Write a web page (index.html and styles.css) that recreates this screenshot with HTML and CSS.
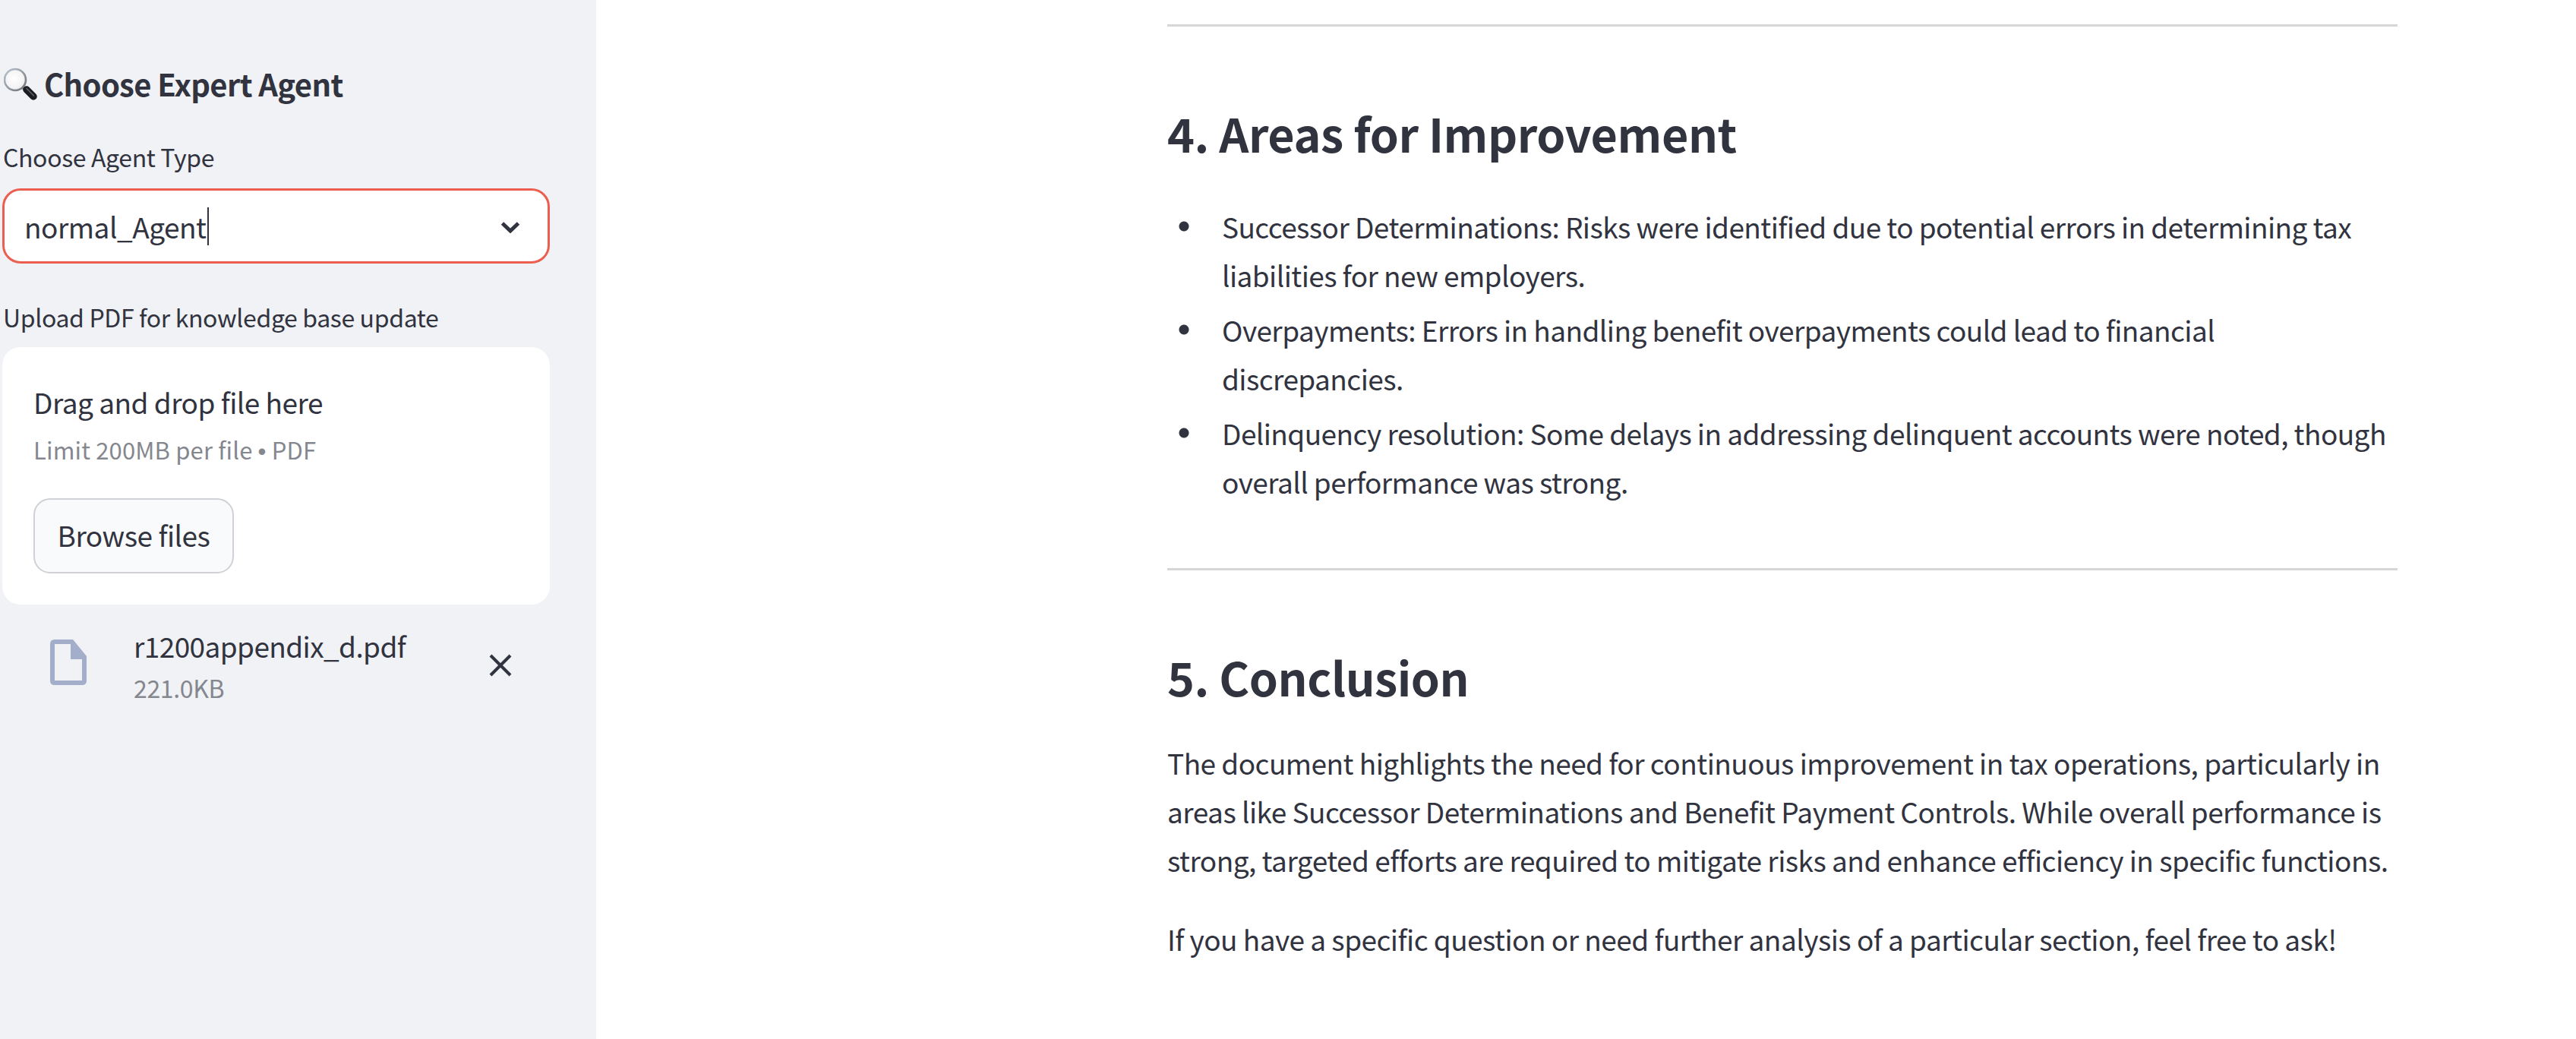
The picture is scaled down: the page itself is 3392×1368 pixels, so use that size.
FILE: index.html
```html
<!DOCTYPE html>
<html lang="en">
<head>
<meta charset="utf-8">
<title>Choose Expert Agent</title>
<link rel="stylesheet" href="styles.css">
</head>
<body>
<div class="app">
  <aside class="sidebar">
    <h3 class="side-title">
      <svg class="emoji" viewBox="0 0 44 44" aria-hidden="true">
        <defs>
          <radialGradient id="lens" cx="0.45" cy="0.45" r="0.6">
            <stop offset="0" stop-color="#ffffff"/>
            <stop offset="0.75" stop-color="#f3f3f3"/>
            <stop offset="1" stop-color="#d2d4d8"/>
          </radialGradient>
          <linearGradient id="rim" x1="0" y1="0" x2="1" y2="1">
            <stop offset="0" stop-color="#b9c6d4"/>
            <stop offset="1" stop-color="#6f7072"/>
          </linearGradient>
        </defs>
        <path d="M24 26 L28 30" stroke="#77787c" stroke-width="4"/>
        <path d="M30 30 L39 39" stroke="#1c1d22" stroke-width="9.5" stroke-linecap="round"/>
        <path d="M30 28.5 L39.5 38" stroke="#5f636b" stroke-width="1.6" stroke-linecap="round"/>
        <circle cx="15" cy="17" r="14" fill="url(#lens)" stroke="url(#rim)" stroke-width="2.6"/>
      </svg>
      <span>Choose Expert Agent</span>
    </h3>
    <label class="field-label label-agent">Choose Agent Type</label>
    <div class="select">
      <span class="select-value">normal_Agent</span><span class="caret"></span>
      <svg class="chevron" viewBox="0 0 26 16" aria-hidden="true"><path d="M2.5 3 L13 13 L23.5 3" fill="none" stroke="#31333f" stroke-width="5" stroke-linejoin="miter"/></svg>
    </div>
    <label class="field-label label-upload">Upload PDF for knowledge base update</label>
    <section class="dropzone">
      <div class="drop-title">Drag and drop file here</div>
      <div class="drop-limit">Limit 200MB per file <span class="dot">•</span> PDF</div>
      <button class="browse" type="button">Browse files</button>
    </section>
    <div class="file-row">
      <svg class="file-icon" viewBox="0 0 48 60" aria-hidden="true">
        <path d="M6 0 H30 L48 22 V54 Q48 60 42 60 H6 Q0 60 0 54 V6 Q0 0 6 0 Z M6 6 V54 H42 V26 H27 V6 Z" fill="#a3aeca" fill-rule="evenodd"/>
      </svg>
      <div class="file-meta">
        <div class="file-name">r1200appendix_d.pdf</div>
        <div class="file-size">221.0KB</div>
      </div>
      <svg class="file-close" viewBox="0 0 30 30" aria-hidden="true"><path d="M2 2 L28 28 M28 2 L2 28" fill="none" stroke="#31333f" stroke-width="4"/></svg>
    </div>
  </aside>
  <main class="main">
    <article class="content">
      <hr class="rule rule-top">
      <h2 class="heading">4. Areas for Improvement</h2>
      <ul class="list">
        <li>Successor Determinations: Risks were identified due to potential errors in determining tax liabilities for new employers.</li>
        <li>Overpayments: Errors in handling benefit overpayments could lead to financial discrepancies.</li>
        <li>Delinquency resolution: Some delays in addressing delinquent accounts were noted, though overall performance was strong.</li>
      </ul>
      <hr class="rule">
      <h2 class="heading">5. Conclusion</h2>
      <p class="para">The document highlights the need for continuous improvement in tax operations, particularly in areas like Successor Determinations and Benefit Payment Controls. While overall performance is strong, targeted efforts are required to mitigate risks and enhance efficiency in specific functions.</p>
      <p class="para">If you have a specific question or need further analysis of a particular section, feel free to ask!</p>
    </article>
  </main>
</div>
</body>
</html>
```
FILE: styles.css
```css
* { box-sizing: border-box; }
html, body { margin: 0; height: 100%; overflow: hidden; }
body {
  font-family: "Noto Sans CJK SC", "Source Sans Pro", "Noto Sans", sans-serif;
  color: #31333f;
  background: #fff;
}
.app { display: flex; height: 1368px; }
.sidebar {
  width: 785px;
  flex: none;
  background: #f0f2f6;
  padding: 0 61px 0 3px;
}
.side-title {
  display: flex;
  align-items: center;
  gap: 9px;
  margin: 80px 0 0;
  height: 60px;
  font-size: 40px;
  letter-spacing: -0.65px;
  font-weight: 700;
  line-height: 60px;
}
.emoji { width: 44px; height: 44px; margin-left: 2px; flex: none; }
.field-label { display: block; font-size: 32px; letter-spacing: -0.36px; line-height: 44px; padding-left: 1px; }
.label-agent { margin-top: 44px; }
.select {
  display: flex;
  align-items: center;
  height: 99px;
  margin-top: 20px;
  padding-left: 26px;
  padding-right: 36px;
  background: #fff;
  border: 3px solid #ec5f50;
  border-radius: 24px;
}
.select-value { font-size: 37px; letter-spacing: -0.5px; line-height: 52px; }
.caret { width: 2px; height: 50px; background: #31333f; margin-left: 2px; }
.chevron { width: 26px; height: 16px; margin-left: auto; margin-top: 2px; }
.label-upload { margin-top: 48px; }
.dropzone {
  height: 339px;
  margin-top: 18px;
  padding: 50px 41px 0;
  background: #fff;
  border-radius: 24px;
}
.drop-title { font-size: 37px; letter-spacing: -0.52px; line-height: 44px; }
.drop-limit { font-size: 31px; letter-spacing: 0.16px; line-height: 44px; margin-top: 19px; color: #85878f; }
.dot { font-family: "Liberation Sans", sans-serif; }
.browse {
  display: block;
  width: 264px;
  height: 99px;
  margin-top: 39px;
  padding: 0 0 3px;
  font: inherit;
  font-size: 37px;
  letter-spacing: -0.5px;
  color: #31333f;
  background: #f9fafc;
  border: 2.5px solid #cfd1d7;
  border-radius: 22px;
}
.file-row {
  display: flex;
  align-items: flex-start;
  padding: 31px 0 0 63px;
  margin-top: 0;
}
.file-icon { width: 48px; height: 60px; margin-top: 15px; flex: none; }
.file-meta { margin-left: 62px; }
.file-name { font-size: 37px; letter-spacing: -0.6px; line-height: 46px; }
.file-size { font-size: 32px; letter-spacing: -0.36px; line-height: 44px; margin-top: 10px; color: #85878f; }
.file-close { width: 30px; height: 30px; margin: 34px 0 0 auto; margin-right: 50px; flex: none; }
.main { flex: 1; padding-left: 752px; }
.content { width: 1620px; }
.rule { margin: 0; border: 0; height: 3px; background: #d6d6d8; }
.rule-top { margin-top: 32px; }
.heading { margin: 90px 0 0; font-size: 61px; letter-spacing: -0.46px; line-height: 100px; font-weight: 700; }
.list {
  margin: 41px 0 0;
  padding: 0;
  list-style: none;
  font-size: 37px;
  letter-spacing: -0.57px;
  line-height: 64px;
}
.list li {
  margin: 0 0 8px;
  padding-left: 72px;
  background: radial-gradient(circle 7px at 22px 32px, #31333f 85%, transparent 100%) no-repeat;
}
.para { margin: 16px 0 0; font-size: 37px; letter-spacing: -0.53px; line-height: 64px; }
.list + .rule { margin-top: 82px; }
.rule + .heading { margin-top: 90px; }
.rule-top + .heading { margin-top: 90px; }
.heading + .para { margin-top: 31px; }
.para + .para { margin-top: 40px; }
```
